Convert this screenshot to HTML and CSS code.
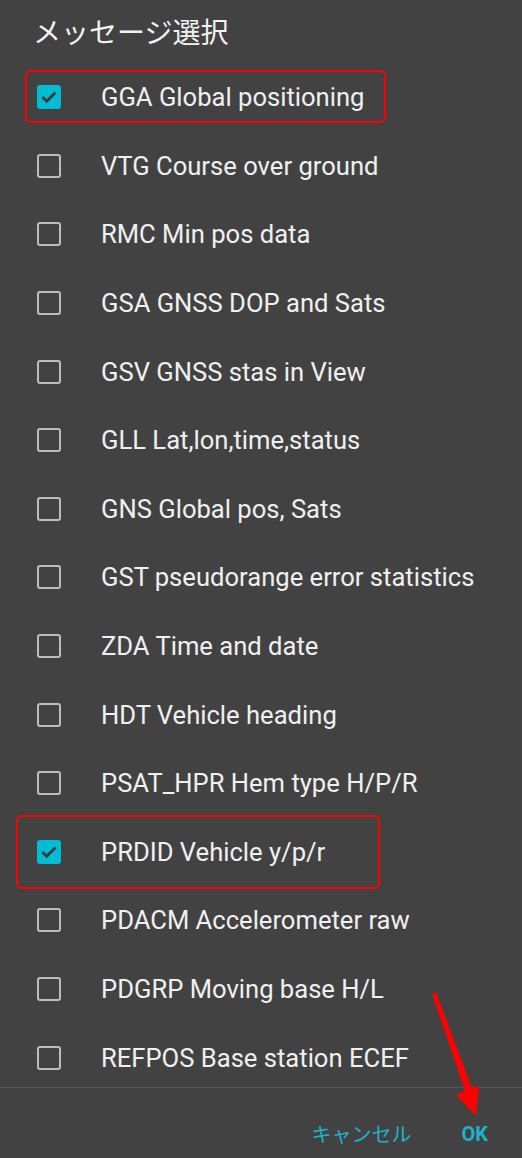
FILE: index.html
```html
<!DOCTYPE html>
<html lang="ja">
<head>
<meta charset="utf-8">
<link rel="stylesheet" href="styles.css">
</head>
<body>
<div class="dialog">
  <h1 class="title">メッセージ選択</h1>
  <ul class="list">
    <li class="row"><span class="cb checked"><svg viewBox="0 0 24 24"><path d="M5.5 12l4.2 4.2L18.5 7.5" /></svg></span><span class="label">GGA Global positioning</span></li>
    <li class="row"><span class="cb"></span><span class="label">VTG Course over ground</span></li>
    <li class="row"><span class="cb"></span><span class="label">RMC Min pos data</span></li>
    <li class="row"><span class="cb"></span><span class="label">GSA GNSS DOP and Sats</span></li>
    <li class="row"><span class="cb"></span><span class="label">GSV GNSS stas in View</span></li>
    <li class="row"><span class="cb"></span><span class="label">GLL Lat,lon,time,status</span></li>
    <li class="row"><span class="cb"></span><span class="label">GNS Global pos, Sats</span></li>
    <li class="row"><span class="cb"></span><span class="label">GST pseudorange error statistics</span></li>
    <li class="row"><span class="cb"></span><span class="label">ZDA Time and date</span></li>
    <li class="row"><span class="cb"></span><span class="label">HDT Vehicle heading</span></li>
    <li class="row"><span class="cb"></span><span class="label">PSAT_HPR Hem type H/P/R</span></li>
    <li class="row"><span class="cb checked"><svg viewBox="0 0 24 24"><path d="M5.5 12l4.2 4.2L18.5 7.5" /></svg></span><span class="label">PRDID Vehicle y/p/r</span></li>
    <li class="row"><span class="cb"></span><span class="label">PDACM Accelerometer raw</span></li>
    <li class="row"><span class="cb"></span><span class="label">PDGRP Moving base H/L</span></li>
    <li class="row"><span class="cb"></span><span class="label">REFPOS Base station ECEF</span></li>
  </ul>
  <div class="actions">
    <button class="btn">キャンセル</button>
    <button class="btn ok">OK</button>
  </div>
  <div class="mark mark1"></div>
  <div class="mark mark2"></div>
  <svg class="arrow" width="522" height="1158" viewBox="0 0 522 1158">
    <path d="M432 994 L436 992 L472 1088 L479 1086 L476 1116 L456 1095 L465 1091 Z" fill="#ff0000"/>
  </svg>
</div>
</body>
</html>
```
FILE: styles.css
```css
html, body {
  margin: 0;
  padding: 0;
  background: #424242;
}
.dialog {
  position: relative;
  width: 522px;
  height: 1158px;
  overflow: hidden;
  font-family: Roboto, "Noto Sans CJK JP", sans-serif;
}
.title {
  margin: 0;
  height: 63px;
  padding: 16px 0 0 33px;
  box-sizing: border-box;
  font-size: 28px;
  font-weight: 400;
  line-height: 36px;
  color: #f2f2f2;
  font-family: Roboto, "Noto Sans CJK JP", sans-serif;
}
.list {
  list-style: none;
  margin: 0;
  padding: 0;
  height: 1024px;
  overflow: hidden;
}
.row {
  height: 68.6px;
  display: flex;
  align-items: center;
}
.cb {
  box-sizing: border-box;
  width: 24px;
  height: 24px;
  margin-left: 37px;
  border: 2.5px solid #bdbdbd;
  border-radius: 3px;
  flex: none;
  display: flex;
  align-items: center;
  justify-content: center;
}
.cb.checked {
  background: #00bcd4;
  border-color: #00bcd4;
}
.cb svg {
  width: 24px;
  height: 24px;
  flex: none;
  fill: none;
  stroke: #3a3a3a;
  stroke-width: 2.8;
}
.label {
  margin-left: 40px;
  font-size: 25.6px;
  color: #f0f0f0;
  white-space: nowrap;
}
.actions {
  border-top: 1px solid #555555;
  height: 70px;
  display: flex;
  justify-content: flex-end;
  align-items: center;
  padding: 0 34px 0 0;
  gap: 50px;
  box-sizing: border-box;
}
.btn {
  background: none;
  border: none;
  padding: 0;
  margin-top: 22px;
  font-family: Roboto, "Noto Sans CJK JP", sans-serif;
  font-size: 20px;
  color: #1fb2cc;
}
.btn.ok {
  font-weight: 700;
}
.mark {
  position: absolute;
  border: 2px solid #ff0000;
  border-radius: 6px;
  box-sizing: border-box;
}
.mark1 {
  left: 25px;
  top: 70px;
  width: 361px;
  height: 53px;
}
.mark2 {
  left: 16px;
  top: 815px;
  width: 364px;
  height: 74px;
}
.arrow {
  position: absolute;
  left: 0;
  top: 0;
  pointer-events: none;
}
```
